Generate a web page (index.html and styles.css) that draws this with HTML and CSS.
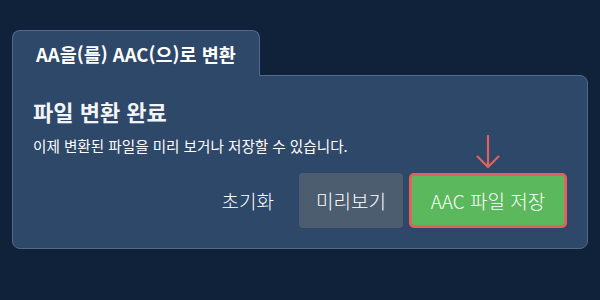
FILE: index.html
```html
<!DOCTYPE html>
<html lang="ko">
<head>
  <meta charset="UTF-8" />
  <title>AAC 변환</title>
  <link rel="stylesheet" href="styles.css">
</head>
<body>
  <div class="dialog">
    <div class="tab">AA을(를) AAC(으)로 변환</div>
    <div class="panel">
      <h2 class="title">파일 변환 완료</h2>
      <p class="desc">이제 변환된 파일을 미리 보거나 저장할 수 있습니다.</p>
      <div class="actions">
        <button class="btn-reset">초기화</button>
        <button class="btn-preview">미리보기</button>
        <div class="save-wrap">
          <svg class="arrow" width="30" height="36" viewBox="0 0 30 36">
            <path d="M15 1 V33 M4 22 L15 33 L26 22" fill="none" stroke="#e0625c" stroke-width="2.2" />
          </svg>
          <button class="btn-save">AAC 파일 저장</button>
        </div>
      </div>
    </div>
  </div>
</body>
</html>
```

FILE: styles.css
```css
body {
  margin: 0;
  background-color: #10223a;
  font-family: 'Noto Sans CJK KR', 'Noto Sans', sans-serif;
  color: #fff;
  width: 600px;
  height: 300px;
  overflow: hidden;
}

.dialog {
  margin: 30px 0 0 12px;
  width: 576px;
}

.tab {
  position: relative;
  z-index: 1;
  width: 223px;
  height: 45px;
  margin-bottom: -1px;
  padding-left: 23px;
  background-color: #2d4869;
  border: 1px solid #52698a;
  border-bottom: none;
  border-radius: 8px 8px 0 0;
  font-size: 18.5px;
  font-weight: 700;
  line-height: 46px;
}

.panel {
  height: 172px;
  background-color: #2d4869;
  border: 1px solid #52698a;
  border-radius: 0 8px 8px 8px;
  padding: 0 20px;
}

.title {
  margin: 20px 0 0 0;
  font-size: 22px;
  font-weight: 700;
  line-height: 30px;
  color: #f2f4f7;
}

.desc {
  margin: 10px 0 0 0;
  font-size: 14.6px;
  line-height: 20px;
}

.actions {
  display: flex;
  justify-content: flex-end;
  align-items: center;
  gap: 6px;
  margin-top: 17px;
}

.actions button {
  font-family: inherit;
  font-size: 19px;
  font-weight: 300;
  color: #fff;
  border: none;
  cursor: pointer;
}

.btn-reset {
  background: none;
  height: 55px;
  padding: 0 19px 0 22px;
  color: #e6ebf0;
}

.btn-preview {
  width: 104px;
  height: 55px;
  background-color: #4c5d70;
  border-radius: 4px;
}

.save-wrap {
  position: relative;
}

.arrow {
  position: absolute;
  left: 64px;
  top: -39px;
}

.btn-save {
  display: block;
  width: 158px;
  height: 55px;
  background-color: #5cb85c;
  border: 3px solid #e0625c !important;
  border-radius: 5px;
}
```
